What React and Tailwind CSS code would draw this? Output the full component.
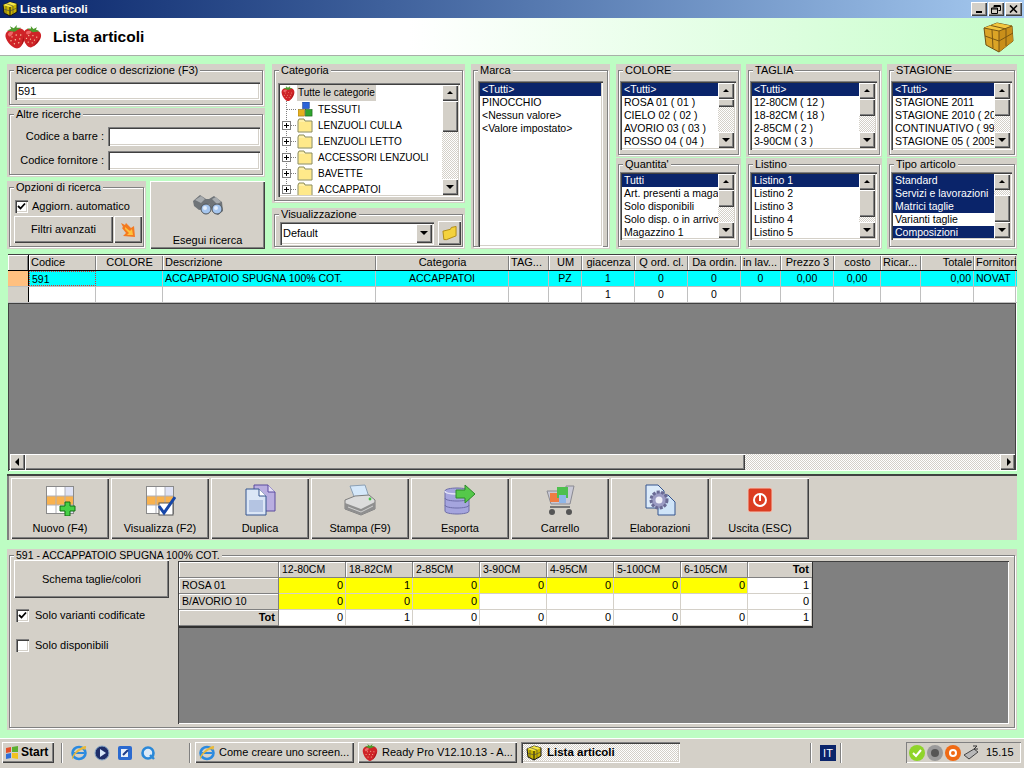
import React from "react";

const RAISED = "shadow-[inset_1px_1px_0_#fff,inset_-1px_-1px_0_#404040,inset_-2px_-2px_0_#808080]";
const SUNKEN = "shadow-[inset_1px_1px_0_#808080,inset_2px_2px_0_#404040,inset_-1px_-1px_0_#fff,inset_-2px_-2px_0_#d4d0c8]";
const CHECKER = "bg-[image:repeating-conic-gradient(#d4d0c8_0_25%,#fff_0_50%)] bg-[length:2px_2px]";

function Berry({ className }) {
  return (
    <svg viewBox="0 0 24 26" className={className}>
      <path d="M12 5C18 2 24 6 23 12C22 19 16 26 12 26C8 26 2 19 1 12C0 6 6 2 12 5Z" fill="#cf2327" />
      <path d="M4 8C7 5 11 6 10 8C8 11 4 13 4 8Z" fill="#ee6466" />
      <path d="M16 24C20 20 22 15 22 11L18 20Z" fill="#9c1518" />
      <path d="M12 7L4 4L9 3L8 0L12 3L16 0L15 3L20 4Z" fill="#4f9a2e" />
      <g fill="#f6c7a0">
        <circle cx="8" cy="12" r=".8" /><circle cx="13" cy="11" r=".8" /><circle cx="18" cy="12" r=".8" />
        <circle cx="6" cy="16" r=".8" /><circle cx="11" cy="16" r=".8" /><circle cx="16" cy="16" r=".8" />
        <circle cx="9" cy="20" r=".8" /><circle cx="14" cy="20" r=".8" />
      </g>
    </svg>
  );
}

function Cube({ className }) {
  return (
    <svg viewBox="0 0 32 32" className={className}>
      <path d="M2 7L15 2L30 5L31 20L17 31L4 24Z" fill="#dba426" stroke="#6e5012" strokeWidth="1" strokeLinejoin="round" />
      <path d="M2 7L15 2L30 5L17 10Z" fill="#f2c63f" />
      <path d="M17 10L30 5L31 20L17 31Z" fill="#c98f1a" />
      <path d="M2 7L17 10L17 31M17 10L30 5M9 4.5L24 8L24 25M10 9L11 27M3 15L17 20L31 12" fill="none" stroke="#7a5712" strokeWidth="1" />
    </svg>
  );
}

function SmallCube({ className }) {
  return (
    <svg viewBox="0 0 16 16" className={className}>
      <path d="M1 4L8 1L15 3V11L8 15L2 12Z" fill="#c8b400" stroke="#111" strokeWidth="1" />
      <path d="M1 4L8 6L15 3L8 1Z" fill="#f5e84a" />
      <path d="M8 6V15" stroke="#111" strokeWidth="1" />
      <path d="M4 2.5L11 5M11 5V13M4 5V13M1.5 8L8 10L15 7" stroke="#444" strokeWidth=".6" fill="none" />
    </svg>
  );
}

function Folder({ className }) {
  return (
    <svg viewBox="0 0 16 15" className={className}>
      <path d="M1 3L2 1H7L8 3H15V14H1Z" fill="#fff0a8" stroke="#8a8a58" />
      <path d="M2 4H14V13H2Z" fill="#ffe98a" />
    </svg>
  );
}

function Arrow({ dir }) {
  const pts = { up: "1,5 4,2 7,5", down: "0,2 8,2 4,6", left: "5,0 5,8 1,4", right: "3,0 3,8 7,4" };
  return (
    <svg viewBox="0 0 8 8" className="w-[8px] h-[8px]">
      <polygon points={pts[dir]} fill="#000" />
    </svg>
  );
}

function ScrollButton({ dir, className = "h-[16px] w-[16px]" }) {
  return (
    <div className={`${className} shrink-0 bg-[#d4d0c8] ${RAISED} flex items-center justify-center`}>
      <Arrow dir={dir} />
    </div>
  );
}

function VScroll({ top = "h-0", thumb }) {
  return (
    <div className="w-[16px] h-full flex flex-col shrink-0">
      <ScrollButton dir="up" />
      <div className={`flex-1 flex flex-col ${CHECKER}`}>
        <div className={`${top} shrink-0`} />
        <div className={`${thumb} shrink-0 bg-[#d4d0c8] ${RAISED}`} />
      </div>
      <ScrollButton dir="down" />
    </div>
  );
}

function Group({ title, className = "", legendClass = "", children }) {
  return (
    <div className={`bg-[#d4d0c8] px-[2px] pb-[2px] ${className}`}>
      <fieldset className="h-full min-w-0 border border-[#808080] shadow-[1px_1px_0_#fff,inset_1px_1px_0_#fff]">
        <legend className={`ml-[4px] px-[2px] h-[13px] bg-[#d4d0c8] whitespace-nowrap ${legendClass}`}>{title}</legend>
        {children}
      </fieldset>
    </div>
  );
}

function Field({ className, children }) {
  return (
    <div className={`bg-white ${SUNKEN} px-[3px] flex items-center ${className}`}>{children}</div>
  );
}

function Button({ className, children }) {
  return (
    <div className={`bg-[#d4d0c8] ${RAISED} flex items-center justify-center ${className}`}>{children}</div>
  );
}

function Check({ checked, children, className = "", gap = "gap-[5px]" }) {
  return (
    <div className={`flex items-center ${gap} ${className}`}>
      <div className={`w-[13px] h-[13px] bg-white ${SUNKEN} flex items-center justify-center`}>
        {checked && (
          <svg viewBox="0 0 9 9" className="w-[9px] h-[9px]">
            <path d="M1 4L3.5 6.5L8 1.5" fill="none" stroke="#000" strokeWidth="1.8" />
          </svg>
        )}
      </div>
      <span>{children}</span>
    </div>
  );
}

function ListBox({ items, selected = [0], className = "", scroll }) {
  return (
    <div className={`bg-white ${SUNKEN} p-[2px] flex overflow-hidden text-[10.5px] ${className}`}>
      <div className="flex-1 min-w-0 overflow-hidden">
        {items.map((t, i) => (
          <div
            key={i}
            className={`h-[13px] px-[2px] whitespace-nowrap ${selected.includes(i) ? "bg-[#0a246a] text-white" : ""}`}
          >
            {t}
          </div>
        ))}
      </div>
      {scroll}
    </div>
  );
}

function ListGroup({ title, items, selected, top, thumb, className, listClass, padClass }) {
  return (
    <Group title={title} className={className}>
      <div className={`pl-[1px] pr-[2px] ${padClass}`}>
        <ListBox items={items} selected={selected} className={listClass} scroll={<VScroll top={top} thumb={thumb} />} />
      </div>
    </Group>
  );
}

function TreeConnector({ plus }) {
  return (
    <svg viewBox="0 0 17 16" className="w-[17px] h-[16px] shrink-0">
      <path d="M6.5 0V16M7 8.5H17" stroke="#808080" strokeDasharray="1 1" fill="none" />
      {plus && (
        <g>
          <rect x="2.5" y="4.5" width="8" height="8" fill="#fff" stroke="#808080" />
          <path d="M4 8.5H9M6.5 6V11" stroke="#000" />
        </g>
      )}
    </svg>
  );
}

function TreeBlocks() {
  return (
    <svg viewBox="0 0 16 16" className="ml-[1px] w-[15px] h-[15px] shrink-0">
      <rect x="5" y="0" width="7" height="7" fill="#2b63d8" stroke="#123a8a" strokeWidth=".6" />
      <rect x="0" y="8" width="7" height="7" fill="#e6b020" stroke="#8a6a10" strokeWidth=".6" />
      <rect x="8" y="8" width="7" height="7" fill="#2fa52f" stroke="#145a14" strokeWidth=".6" />
    </svg>
  );
}

function Binoculars() {
  return (
    <svg viewBox="0 0 32 24" className="w-[32px] h-[24px]">
      <path d="M1 7L8 1L14 5L17 5L22 2L30 8L31 17L26 21L21 18L17 10L14 10L12 15L7 16L2 12Z" fill="#6f7478" />
      <path d="M3 6L9 2L13 5L9 9Z" fill="#a7abae" />
      <path d="M20 5L24 3L29 8L25 10Z" fill="#a7abae" />
      <circle cx="14" cy="15" r="5" fill="#a6c6ee" stroke="#50555a" />
      <circle cx="25" cy="15" r="5" fill="#a6c6ee" stroke="#50555a" />
      <circle cx="13" cy="14" r="2" fill="#e3eefb" />
      <circle cx="24" cy="14" r="2" fill="#e3eefb" />
    </svg>
  );
}

function FlameArrow() {
  return (
    <svg viewBox="0 0 16 16" className="w-[16px] h-[16px]">
      <path d="M1 1L5 3L6 1L11 6L14 4L15 15L3 14L6 11L2 6L3 5Z" fill="#f47a20" />
      <path d="M5 5L10 9L12 7L13 13L7 13L9 11L5 7Z" fill="#ffc23a" />
    </svg>
  );
}

function GridIcon({ children }) {
  return (
    <svg viewBox="0 0 32 32" className="w-[32px] h-[32px]">
      <rect x="2.5" y="2.5" width="27" height="27" fill="#fff" stroke="#8a8a8a" />
      <rect x="3" y="12" width="26" height="9" fill="#f9b24e" />
      <rect x="21" y="3" width="8" height="9" fill="#dfe3f6" />
      <rect x="21" y="21" width="8" height="8" fill="#dfe3f6" />
      <path d="M12 3V29M21 3V29M3 12H29M3 21H29" stroke="#b0b0b8" />
      {children}
    </svg>
  );
}

function IconNuovo() {
  return (
    <GridIcon>
      <path d="M21 18H26V22H31V27H26V32H21V27H16V22H21Z" fill="#46d046" stroke="#136e13" />
    </GridIcon>
  );
}

function IconVisualizza() {
  return (
    <GridIcon>
      <rect x="15" y="19" width="14" height="12" fill="#fff" stroke="#555" />
      <path d="M15 22L20 29L31 13" fill="none" stroke="#1646a8" strokeWidth="3" />
    </GridIcon>
  );
}

function IconDuplica() {
  return (
    <svg viewBox="0 0 32 32" className="w-[32px] h-[32px]">
      <path d="M10 1H24L31 8V27H10Z" fill="#b9aee0" stroke="#5b4a9e" />
      <path d="M24 1V8H31" fill="#e4dff6" stroke="#5b4a9e" />
      <path d="M2 5H15L22 12V31H2Z" fill="#dbe6f6" stroke="#35548e" />
      <path d="M15 5V12H22" fill="#fff" stroke="#35548e" />
      <rect x="5" y="16" width="14" height="12" fill="#b4c4e2" />
    </svg>
  );
}

function IconStampa() {
  return (
    <svg viewBox="0 0 32 32" className="w-[32px] h-[32px]">
      <path d="M6 2L21 1L25 13L11 15Z" fill="#d5e8fa" stroke="#8ba0b5" />
      <path d="M1 16L11 12L25 11L31 16V25L17 31L1 25Z" fill="#dcdcdc" stroke="#7d7d7d" />
      <path d="M1 19L17 25L31 18V25L17 31L1 25Z" fill="#8f8f8f" />
      <path d="M4 23L17 28L29 22" stroke="#d0d0d0" fill="none" />
      <circle cx="26" cy="15" r="1.4" fill="#46c046" />
    </svg>
  );
}

function IconEsporta() {
  return (
    <svg viewBox="0 0 32 32" className="w-[32px] h-[32px]">
      <path d="M1 7C1 3 25 3 25 7V27C25 31 1 31 1 27Z" fill="#a5a5de" stroke="#6d6da8" />
      <path d="M1 7C1 11 25 11 25 7" fill="none" stroke="#e2e2f8" strokeWidth="1.5" />
      <path d="M1 14C1 18 25 18 25 14M1 21C1 25 25 25 25 21" fill="none" stroke="#6d6da8" />
      <path d="M12 6H21V1L31 10L21 19V14H12Z" fill="#55c84a" stroke="#2e8a2a" />
    </svg>
  );
}

function IconCarrello() {
  return (
    <svg viewBox="0 0 32 32" className="w-[32px] h-[32px]">
      <path d="M22 2H30L26 20H7L3 7H22Z" fill="#c9c9d6" stroke="#8a8a92" />
      <rect x="6" y="9" width="9" height="9" fill="#ef7c42" />
      <rect x="13" y="3" width="11" height="11" fill="#4ec04e" />
      <rect x="15" y="11" width="7" height="8" fill="#8fb6e8" />
      <path d="M6 23H26" stroke="#777" strokeWidth="2" />
      <circle cx="8" cy="28" r="3" fill="#555" />
      <circle cx="25" cy="28" r="3" fill="#555" />
    </svg>
  );
}

function IconElabora() {
  return (
    <svg viewBox="0 0 32 32" className="w-[32px] h-[32px]">
      <path d="M2 1H14L20 7V24H2Z" fill="#dcebfa" stroke="#35548e" />
      <path d="M14 11H24L31 18V31H14Z" fill="#cfe4f8" stroke="#35548e" />
      <circle cx="15" cy="16" r="8" fill="#9c9cc4" stroke="#6a6a94" strokeWidth="3" strokeDasharray="3 1.4" />
      <circle cx="15" cy="16" r="3.5" fill="#eeeef8" />
    </svg>
  );
}

function IconUscita() {
  return (
    <svg viewBox="0 0 32 32" className="w-[32px] h-[32px]">
      <rect x="4" y="4" width="24" height="24" rx="2" fill="#dc3d22" stroke="#f4c8b8" />
      <circle cx="16" cy="16" r="6" fill="none" stroke="#fff" strokeWidth="2" />
      <path d="M16 11V17" stroke="#fff" strokeWidth="2" />
    </svg>
  );
}

function ToolButton({ icon, label }) {
  return (
    <div className={`w-[98px] h-[61px] bg-[#d4d0c8] ${RAISED} flex flex-col items-center pt-[6px]`}>
      {icon}
      <span className="mt-[6px] whitespace-nowrap">{label}</span>
    </div>
  );
}

const COLS =
  "grid grid-cols-[21px_67px_67px_213px_133px_40px_33px_53px_53px_53px_40px_53px_47px_40px_53px_42px]";
const HEAD = [
  ["", ""],
  ["Codice", "text-left"],
  ["COLORE", "text-center"],
  ["Descrizione", "text-left"],
  ["Categoria", "text-center"],
  ["TAG...", "text-left"],
  ["UM", "text-center"],
  ["giacenza", "text-center"],
  ["Q ord. cl.", "text-center"],
  ["Da ordin.", "text-center"],
  ["in lav...", "text-left"],
  ["Prezzo 3", "text-center"],
  ["costo", "text-center"],
  ["Ricar...", "text-left"],
  ["Totale", "text-right"],
  ["Fornitori", "text-left"],
];
const ROW1 = ["", "591", "", "ACCAPPATOIO SPUGNA 100% COT.", "ACCAPPATOI", "", "PZ", "1", "0", "0", "0", "0,00", "0,00", "", "0,00", "NOVAT"];
const ROW2 = ["", "", "", "", "", "", "", "1", "0", "0", "", "", "", "", "", ""];
const ALIGN = ["", "text-left", "", "text-left", "text-center", "", "text-center", "text-center", "text-center", "text-center", "text-center", "text-center", "text-center", "", "text-right", "text-left"];

function MainGrid() {
  return (
    <div className="ml-[1px] mt-[5px] w-[1009px] h-[217px] bg-[#808080] flex flex-col pt-[1px] shadow-[inset_1px_1px_0_#404040,inset_-1px_-1px_0_#fff,inset_-2px_-2px_0_#404040]">
      <div className={`${COLS} border-b border-black h-[16px] bg-[#d4d0c8]`}>
        {HEAD.map(([t, a], i) => (
          <div
            key={i}
            className={`h-[15px] px-[2px] overflow-hidden whitespace-nowrap leading-[15px] ${a} shadow-[inset_1px_1px_0_#fff,inset_-1px_0_0_#808080] ${i === 0 ? "border-r border-black" : ""}`}
          >
            {t}
          </div>
        ))}
      </div>
      <div className={`${COLS} h-[16px] bg-[#00ffff] border-b border-[#c0c0c0] text-[10.5px]`}>
        {ROW1.map((t, i) => (
          <div
            key={i}
            className={`px-[2px] overflow-hidden whitespace-nowrap leading-[14px] border-r ${ALIGN[i]} ${
              i === 0
                ? "bg-[#ffc080] border-black"
                : i === 1
                  ? "border-dotted border border-[#e03030]"
                  : "border-[#c0c0c0]"
            }`}
          >
            {t}
          </div>
        ))}
      </div>
      <div className={`${COLS} h-[16px] bg-white border-b border-[#c0c0c0] text-[10.5px]`}>
        {ROW2.map((t, i) => (
          <div
            key={i}
            className={`px-[2px] overflow-hidden whitespace-nowrap leading-[14px] border-r ${ALIGN[i]} ${
              i === 0 ? "bg-[#d4d0c8] border-black" : "border-[#c0c0c0]"
            }`}
          >
            {t}
          </div>
        ))}
      </div>
      <div className="h-[1px] bg-[#404040] w-[1007px]" />
      <div className="flex-1" />
      <div className="h-[16px] mb-[1px] ml-[2px] mr-[2px] flex">
        <ScrollButton dir="left" className="w-[15px] h-[16px]" />
        <div className={`w-[720px] h-full bg-[#d4d0c8] ${RAISED}`} />
        <div className={`flex-1 ${CHECKER}`} />
        <ScrollButton dir="right" className="w-[15px] h-[16px]" />
      </div>
    </div>
  );
}

const SIZES = ["12-80CM", "18-82CM", "2-85CM", "3-90CM", "4-95CM", "5-100CM", "6-105CM"];
const VCOLS = "grid grid-cols-[100px_67px_67px_67px_67px_67px_67px_67px_64px]";

function VariantRow({ label, bold, values, yellow, total }) {
  return (
    <div className={`${VCOLS} h-[16px]`}>
      <div
        className={`px-[3px] leading-[15px] bg-[#d4d0c8] border-r border-b border-[#808080] shadow-[inset_1px_1px_0_#fff] ${bold ? "font-bold text-right" : "text-[10.5px]"}`}
      >
        {label}
      </div>
      {values.map((v, i) => (
        <div
          key={i}
          className={`px-[2px] text-right leading-[15px] border-r border-b border-[#d4d0c8] ${i < yellow ? "bg-[#ffff00]" : "bg-white"}`}
        >
          {v}
        </div>
      ))}
      <div className="px-[2px] text-right leading-[15px] bg-white border-b border-r border-[#d4d0c8]">{total}</div>
    </div>
  );
}

function VariantTable() {
  return (
    <div className="w-[634px] border-r border-b-2 border-[#303030] ml-[1px] mt-[1px]">
      <div className={`${VCOLS} h-[16px] bg-[#d4d0c8]`}>
        <div className="border-r border-b border-[#808080] shadow-[inset_1px_1px_0_#fff]" />
        {SIZES.map((s) => (
          <div key={s} className="px-[3px] leading-[15px] text-[10.5px] border-r border-b border-[#808080] shadow-[inset_1px_1px_0_#fff] whitespace-nowrap">
            {s}
          </div>
        ))}
        <div className="px-[3px] leading-[15px] text-right font-bold border-b border-[#808080] shadow-[inset_1px_1px_0_#fff]">Tot</div>
      </div>
      <VariantRow label="ROSA 01" values={[0, 1, 0, 0, 0, 0, 0]} yellow={7} total={1} />
      <VariantRow label="B/AVORIO 10" values={[0, 0, 0, "", "", "", ""]} yellow={3} total={0} />
      <VariantRow label="Tot" bold values={[0, 1, 0, 0, 0, 0, 0]} yellow={0} total={1} />
    </div>
  );
}

function TrayBubble({ className, children }) {
  return <div className={`w-[16px] h-[16px] rounded-full flex items-center justify-center shrink-0 ${className}`}>{children}</div>;
}

function IeIcon({ className = "w-[16px] h-[16px]" }) {
  return (
    <svg viewBox="0 0 16 16" className={`${className} shrink-0`}>
      <ellipse cx="8" cy="8" rx="6.5" ry="6" fill="none" stroke="#2a8ae0" strokeWidth="2.6" />
      <path d="M3 8H13" stroke="#2a8ae0" strokeWidth="2" />
      <path d="M1 14C0 10 8 2 14 1C16 1 15 3 14 5C13 3 8 5 3 11C2 13 2 14 1 14Z" fill="#e8b93a" />
    </svg>
  );
}

function TaskButton({ icon, label, active }) {
  return (
    <div
      className={`w-[159px] h-[21px] flex items-center whitespace-nowrap overflow-hidden ${
        active ? `${CHECKER} font-bold text-[11.5px] gap-[5px] pl-[5px] ${SUNKEN}` : `bg-[#d4d0c8] gap-[4px] pl-[4px] ${RAISED}`
      }`}
    >
      {icon}
      <span>{label}</span>
    </div>
  );
}

const Divider = () => <div className="w-[2px] h-[20px] bg-white border-l border-[#808080] shrink-0" />;

function Taskbar() {
  return (
    <div className="h-[30px] shrink-0 bg-[#d4d0c8] border-t border-white flex items-center pl-[2px] pb-[5px] pt-[3px]">
      <div className={`w-[52px] h-[21px] ${RAISED} flex items-center gap-[2px] pl-[3px] font-bold text-[12px]`}>
        <svg viewBox="0 0 14 14" className="w-[14px] h-[14px] shrink-0">
          <path d="M1 2L6 1V6L1 7Z" fill="#e2502a" />
          <path d="M7 1L13 0V6L7 6Z" fill="#5cb030" />
          <path d="M1 8L6 7V12L1 13Z" fill="#2f6fd8" />
          <path d="M7 7H13V13L7 12Z" fill="#f2c21f" />
        </svg>
        <span>Start</span>
      </div>
      <div className="ml-[7px]"><Divider /></div>
      <div className="ml-[8px] w-[85px] flex items-center justify-between">
        <IeIcon />
        <svg viewBox="0 0 16 16" className="w-[16px] h-[16px]">
          <circle cx="8" cy="8" r="7" fill="#1f2f6a" stroke="#86a8c8" />
          <path d="M6 4L12 8L6 12Z" fill="#d8e8fa" />
        </svg>
        <svg viewBox="0 0 16 16" className="w-[16px] h-[16px]">
          <rect x="1" y="1" width="14" height="14" rx="2" fill="#2a6ad0" />
          <path d="M4 4H11V12H4Z" fill="#e8f0fa" />
          <path d="M6 10L11 5" stroke="#1a3a8a" strokeWidth="2" />
        </svg>
        <svg viewBox="0 0 16 16" className="w-[16px] h-[16px]">
          <circle cx="8" cy="8" r="5.5" fill="#dceaf8" stroke="#2a88d8" strokeWidth="2.6" />
          <path d="M10 10L14 14" stroke="#2a88d8" strokeWidth="2.4" />
        </svg>
      </div>
      <div className="ml-[33px]"><Divider /></div>
      <div className="ml-[4px] flex gap-[4px]">
        <TaskButton icon={<IeIcon />} label="Come creare uno screen..." />
        <TaskButton icon={<Berry className="w-[16px] h-[17px] shrink-0" />} label="Ready Pro V12.10.13 - A..." />
        <TaskButton icon={<SmallCube className="w-[16px] h-[16px] shrink-0" />} label="Lista articoli" active />
      </div>
      <div className="ml-[130px]"><Divider /></div>
      <div className="ml-[8px] w-[16px] h-[16px] bg-[#0a246a] text-white text-center leading-[16px] shrink-0">IT</div>
      <div className="ml-[4px]"><Divider /></div>
      <div className="ml-[64px] w-[115px] h-[21px] shrink-0 flex items-center gap-[2px] pl-[3px] shadow-[inset_1px_1px_0_#808080,inset_-1px_-1px_0_#fff]">
        <TrayBubble className="bg-[#8fd42a]">
          <svg viewBox="0 0 10 10" className="w-[10px] h-[10px]"><path d="M1 5L4 8L9 2" stroke="#fff" strokeWidth="2" fill="none" /></svg>
        </TrayBubble>
        <TrayBubble className="bg-[#9a9a9a]"><div className="w-[8px] h-[8px] rounded-full bg-[#555]" /></TrayBubble>
        <TrayBubble className="bg-[#f06a14]"><div className="w-[8px] h-[8px] rounded-full border-2 border-white" /></TrayBubble>
        <svg viewBox="0 0 16 16" className="w-[16px] h-[16px] shrink-0">
          <path d="M1 10L11 4L15 7L6 14Z" fill="#b8b8b8" stroke="#444" />
          <path d="M10 1H14L11 4H15" stroke="#333" fill="none" />
        </svg>
        <span className="ml-[5px]">15.15</span>
      </div>
    </div>
  );
}

const TREE = ["LENZUOLI CULLA", "LENZUOLI LETTO", "ACCESSORI LENZUOLI", "BAVETTE", "ACCAPPATOI"];

export default function App() {
  return (
    <div className="w-[1024px] h-[768px] overflow-hidden flex flex-col bg-[#bdfdc3] text-black text-[11px] leading-[13px] [font-family:'Liberation_Sans',Arial,sans-serif]">
      {/* Title bar */}
      <div className="h-[18px] shrink-0 flex items-center pl-[2px] pr-[2px] bg-gradient-to-r from-[#0a246a] to-[#a6caf0]">
        <SmallCube className="w-[16px] h-[16px]" />
        <span className="ml-[2px] text-white font-bold text-[11.5px]">Lista articoli</span>
        <div className="ml-auto flex">
          <div className={`w-[16px] h-[14px] bg-[#d4d0c8] ${RAISED} flex items-end justify-center pb-[3px]`}>
            <div className="w-[6px] h-[2px] bg-black" />
          </div>
          <div className={`ml-[1px] w-[16px] h-[14px] bg-[#d4d0c8] ${RAISED} flex items-center justify-center`}>
            <svg viewBox="0 0 10 9" className="w-[10px] h-[9px]">
              <path d="M3 0.5H9.5V5.5H7.5M3 0.5V2.5M3 1.5H9.5" stroke="#000" fill="none" />
              <path d="M0.5 3H6.5V8.5H0.5ZM0.5 4H6.5" stroke="#000" fill="none" />
            </svg>
          </div>
          <div className={`ml-[1px] w-[17px] h-[14px] bg-[#d4d0c8] ${RAISED} flex items-center justify-center`}>
            <svg viewBox="0 0 9 8" className="w-[9px] h-[8px]"><path d="M1 0.5L8 7.5M8 0.5L1 7.5" stroke="#000" strokeWidth="1.6" /></svg>
          </div>
        </div>
      </div>

      {/* Header */}
      <div className="h-[38px] shrink-0 flex items-center pl-[5px] pr-[10px] border-b border-[#a8b0a8] bg-gradient-to-r from-white from-40% to-[#c6fdca]">
        <div className="flex w-[37px]">
          <Berry className="w-[22px] h-[24px] -rotate-12" />
          <Berry className="w-[20px] h-[22px] -ml-[4px] mt-[1px] rotate-12" />
        </div>
        <span className="ml-[11px] text-[15.5px] leading-[18px] font-bold">Lista articoli</span>
        <Cube className="ml-auto w-[32px] h-[32px]" />
      </div>

      <div className="flex-1 px-[7px] pt-[8px] flex flex-col min-h-0">
        {/* Filter row */}
        <div className="flex h-[185px] shrink-0">
          <div className="w-[258px] flex flex-col shrink-0">
            <Group title="Ricerca per codice o descrizione (F3)" className="h-[43px]">
              <div className="pl-[5px] pt-[5px]">
                <Field className="w-[245px] h-[18px]">591</Field>
              </div>
            </Group>
            <Group title="Altre ricerche" className="h-[69px] mt-[1px]">
              <div className="pl-[2px] pt-[6px] flex flex-col gap-[5px]">
                <div className="flex items-center">
                  <span className="w-[92px] text-right">Codice a barre :</span>
                  <Field className="ml-[4px] w-[152px] h-[19px]" />
                </div>
                <div className="flex items-center">
                  <span className="w-[92px] text-right">Codice fornitore :</span>
                  <Field className="ml-[4px] w-[152px] h-[19px]" />
                </div>
              </div>
            </Group>
            <div className="flex mt-[4px] flex-1 min-h-0">
              <Group title="Opzioni di ricerca" className="w-[139px] h-[68px]">
                <div className="pl-[5px] pt-[6px]">
                  <Check checked className="h-[13px]" gap="gap-[4px]">Aggiorn. automatico</Check>
                  <div className="flex mt-[3px] -ml-[1px]">
                    <Button className="w-[99px] h-[27px]">Filtri avanzati</Button>
                    <Button className="ml-[1px] w-[28px] h-[27px]"><FlameArrow /></Button>
                  </div>
                </div>
              </Group>
              <div className={`ml-[4px] w-[115px] h-[68px] bg-[#d4d0c8] ${RAISED} flex flex-col items-center pt-[13px]`}>
                <Binoculars />
                <span className="mt-[16px]">Esegui ricerca</span>
              </div>
            </div>
          </div>

          <div className="ml-[7px] w-[193px] flex flex-col shrink-0">
            <Group title="Categoria" className="h-[139px]">
              <div className="pl-[3px] pt-[6px]">
                <div className={`w-[182px] h-[114px] bg-white ${SUNKEN} p-[2px] flex overflow-hidden`}>
                  <div className="flex-1 min-w-0 overflow-hidden whitespace-nowrap text-[10px]">
                    <div className="flex items-center h-[16px] pl-[1px]">
                      <Berry className="w-[14px] h-[15px] shrink-0" />
                      <span className="ml-[2px] bg-[#d4d0c8] px-[1px] leading-[16px]">Tutte le categorie</span>
                    </div>
                    <div className="flex items-center h-[16px]">
                      <TreeConnector />
                      <TreeBlocks />
                      <span className="ml-[5px]">TESSUTI</span>
                    </div>
                    {TREE.map((t) => (
                      <div key={t} className="flex items-center h-[16px]">
                        <TreeConnector plus />
                        <Folder className="w-[16px] h-[15px] shrink-0" />
                        <span className="ml-[5px]">{t}</span>
                      </div>
                    ))}
                  </div>
                  <VScroll thumb="h-[31px]" />
                </div>
              </div>
            </Group>
            <Group title="Visualizzazione" className="h-[41px] mt-[5px]">
              <div className="pl-[5px] pt-[1px] flex items-center -mt-[1px]">
                <div className={`w-[154px] h-[23px] bg-white ${SUNKEN} flex items-center pl-[3px] pr-[2px]`}>
                  <span>Default</span>
                  <ScrollButton dir="down" className="ml-auto w-[16px] h-[19px]" />
                </div>
                <Button className="ml-[4px] w-[23px] h-[24px]">
                  <svg viewBox="0 0 16 15" className="w-[15px] h-[15px]">
                    <path d="M1 5L9 3L10 1L15 0V10L5 14L2 14Z" fill="#f4d23c" stroke="#b08a10" />
                  </svg>
                </Button>
              </div>
            </Group>
          </div>

          <Group title="Marca" className="ml-[6px] w-[139px] h-[185px] shrink-0">
            <div className="pl-[4px] pt-[4px]">
              <ListBox
                className="w-[125px] h-[166px]"
                items={["<Tutti>", "PINOCCHIO", "<Nessun valore>", "<Valore impostato>"]}
              />
            </div>
          </Group>

          <div className="ml-[6px] w-[125px] flex flex-col shrink-0">
            <ListGroup
              title="COLORE"
              className="h-[93px]"
              padClass="pt-[4px]"
              listClass="w-[116px] h-[69px]"
              items={["<Tutti>", "ROSA 01 ( 01 )", "CIELO 02 ( 02 )", "AVORIO 03 ( 03 )", "ROSSO 04 ( 04 )"]}
              thumb="h-[8px]"
            />
            <ListGroup
              title="Quantita'"
              className="h-[91px] mt-[1px]"
              padClass="pt-[1px]"
              listClass="w-[116px] h-[68px]"
              items={["Tutti", "Art. presenti a magazzino", "Solo disponibili", "Solo disp. o in arrivo", "Magazzino 1"]}
              thumb="h-[17px]"
            />
          </div>

          <div className="ml-[5px] w-[136px] flex flex-col shrink-0">
            <ListGroup
              title="TAGLIA"
              className="h-[93px]"
              padClass="pt-[4px]"
              listClass="w-[127px] h-[69px]"
              items={["<Tutti>", "12-80CM ( 12 )", "18-82CM ( 18 )", "2-85CM ( 2 )", "3-90CM ( 3 )"]}
              thumb="h-[17px]"
            />
            <ListGroup
              title="Listino"
              className="h-[91px] mt-[1px]"
              padClass="pt-[1px]"
              listClass="w-[127px] h-[68px]"
              items={["Listino 1", "Listino 2", "Listino 3", "Listino 4", "Listino 5"]}
              thumb="h-[27px]"
            />
          </div>

          <div className="ml-[5px] w-[130px] flex flex-col shrink-0">
            <ListGroup
              title="STAGIONE"
              className="h-[93px]"
              padClass="pt-[4px]"
              listClass="w-[121px] h-[69px]"
              items={["<Tutti>", "STAGIONE 2011", "STAGIONE 2010 ( 2010 )", "CONTINUATIVO ( 99 )", "STAGIONE 05 ( 2005 )"]}
              thumb="h-[17px]"
            />
            <ListGroup
              title="Tipo articolo"
              className="h-[91px] mt-[1px]"
              padClass="pt-[1px]"
              listClass="w-[121px] h-[68px]"
              items={["Standard", "Servizi e lavorazioni", "Matrici taglie", "Varianti taglie", "Composizioni"]}
              selected={[0, 1, 2, 4]}
              top="h-[5px]"
              thumb="h-[27px]"
            />
          </div>
        </div>

        <MainGrid />

        {/* Toolbar */}
        <div className="mt-[3px] h-[66px] w-[1010px] shrink-0 bg-[#d4d0c8] pl-[4px] pt-[4px] flex gap-[2px] shadow-[inset_0_2px_0_#404040,inset_2px_0_0_#808080]">
          <ToolButton icon={<IconNuovo />} label="Nuovo (F4)" />
          <ToolButton icon={<IconVisualizza />} label="Visualizza (F2)" />
          <ToolButton icon={<IconDuplica />} label="Duplica" />
          <ToolButton icon={<IconStampa />} label="Stampa (F9)" />
          <ToolButton icon={<IconEsporta />} label="Esporta" />
          <ToolButton icon={<IconCarrello />} label="Carrello" />
          <ToolButton icon={<IconElabora />} label="Elaborazioni" />
          <ToolButton icon={<IconUscita />} label="Uscita (ESC)" />
        </div>

        {/* Variants */}
        <Group
          title="591 - ACCAPPATOIO SPUGNA 100% COT."
          legendClass="text-[10.5px]"
          className="mt-[9px] h-[181px] w-[1010px] shrink-0"
        >
          <div className="flex pl-[4px] -mt-[2px]">
            <div className="w-[155px] shrink-0">
              <Button className="w-[155px] h-[38px]">Schema taglie/colori</Button>
              <Check checked className="mt-[11px] ml-[2px]" gap="gap-[6px]">Solo varianti codificate</Check>
              <Check className="mt-[17px] ml-[2px]" gap="gap-[6px]">Solo disponibili</Check>
            </div>
            <div className="ml-[9px] w-[831px] h-[163px] mt-[1px] bg-[#808080] shadow-[inset_1px_1px_0_#404040,inset_-1px_-1px_0_#fff]">
              <VariantTable />
            </div>
          </div>
        </Group>
      </div>

      <Taskbar />
    </div>
  );
}
